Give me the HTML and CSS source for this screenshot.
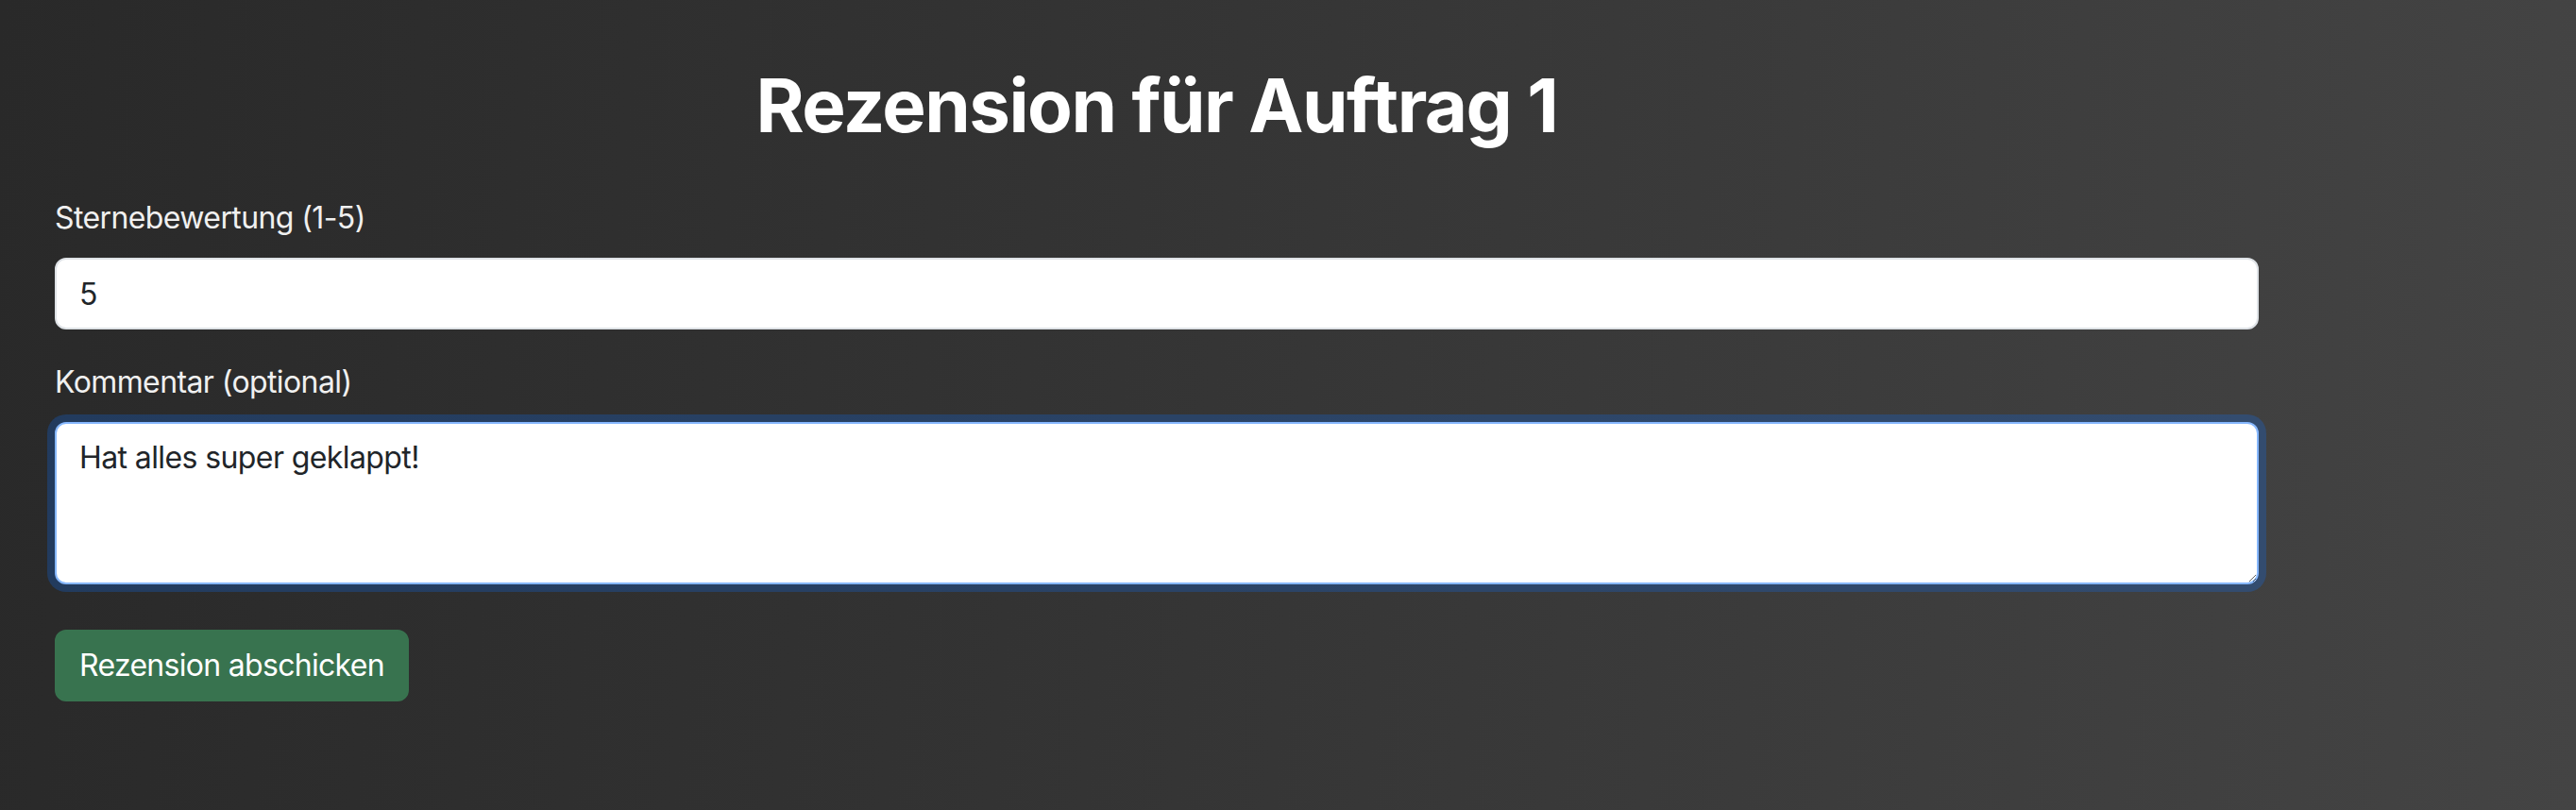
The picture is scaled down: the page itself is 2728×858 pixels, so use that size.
FILE: index.html
```html
<!DOCTYPE html>
<html lang="de">
<head>
<meta charset="utf-8">
<title>Rezension für Auftrag 1</title>
<link rel="stylesheet" href="styles.css">
</head>
<body>
<main class="container">
  <h1 class="title">Rezension für Auftrag 1</h1>
  <form class="review-form">
    <div class="field">
      <label class="field-label" for="rating">Sternebewertung (1-5)</label>
      <input class="control" id="rating" type="text" value="5">
    </div>
    <div class="field">
      <label class="field-label" for="comment">Kommentar (optional)</label>
      <textarea class="control control-area is-focused" id="comment" rows="3">Hat alles super geklappt!</textarea>
    </div>
    <div class="actions">
      <button class="btn-submit" type="button">Rezension abschicken</button>
    </div>
  </form>
</main>
</body>
</html>
```
FILE: styles.css
```css
html, body {
  margin: 0;
  padding: 0;
}
body {
  width: 2728px;
  height: 858px;
  overflow: hidden;
  background: linear-gradient(95deg, #292929 0%, #333333 40%, #444444 100%);
  font-family: Inter, "Noto Sans", "Liberation Sans", sans-serif;
  color: #f1f1f1;
}
.container {
  width: 2334px;
  margin-left: 58px;
  padding-top: 64px;
  box-sizing: border-box;
}
.title {
  margin: 0 0 47px 0;
  font-size: 78px;
  line-height: 96px;
  font-weight: 700;
  text-align: center;
  color: #ffffff;
  letter-spacing: -1.5px;
}
.review-form {
  display: flex;
  flex-direction: column;
}
.field {
  display: flex;
  flex-direction: column;
  margin-bottom: 32px;
}
.field-label {
  font-size: 32px;
  line-height: 48px;
  margin-bottom: 18px;
  color: #f0f0f0;
  letter-spacing: -0.6px;
}
.control {
  display: block;
  width: 100%;
  box-sizing: border-box;
  font-family: Inter, "Noto Sans", "Liberation Sans", sans-serif;
  font-size: 32px;
  line-height: 48px;
  letter-spacing: -0.6px;
  color: #212529;
  background: #ffffff;
  border: 2px solid #dee2e6;
  border-radius: 12px;
  padding: 12px 24px;
  height: 76px;
  outline: none;
}
.control-area {
  height: 172px;
  resize: vertical;
}
.control-area.is-focused {
  border-color: #86b7fe;
  box-shadow: 0 0 0 8px rgba(13, 110, 253, 0.25);
}
.actions {
  margin-top: 16px;
  display: flex;
}
.btn-submit {
  font-family: Inter, "Noto Sans", "Liberation Sans", sans-serif;
  font-size: 32px;
  line-height: 48px;
  letter-spacing: -0.7px;
  color: #ffffff;
  background: #38734f;
  border: 2px solid #38734f;
  border-radius: 12px;
  padding: 12px 24px;
  cursor: pointer;
}
```
